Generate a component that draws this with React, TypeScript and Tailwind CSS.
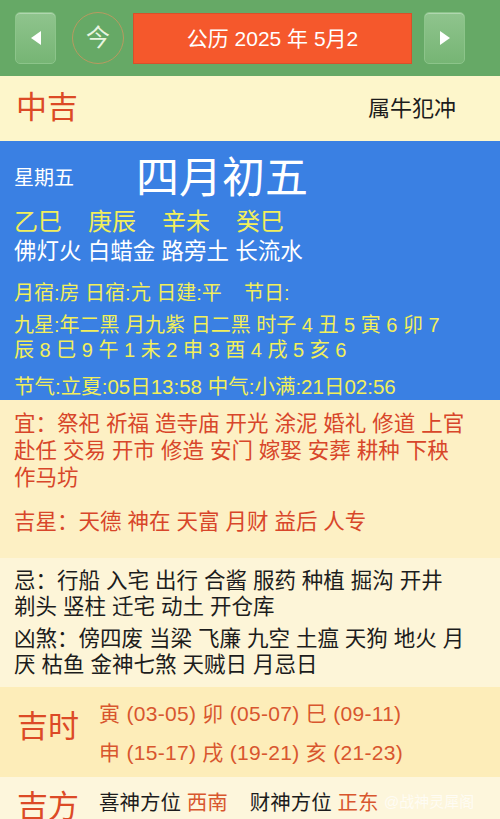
const cjk = { fontFamily: '"Liberation Sans", "Noto Sans CJK SC", sans-serif' }

function NavButton({ dir }: { dir: 'left' | 'right' }) {
  return (
    <div className="w-[41px] h-[52px] rounded-[5px] border border-[#8cc48a] bg-gradient-to-b from-[#8fc48d] to-[#76b574] flex items-center justify-center shadow-[inset_0_1px_0_rgba(255,255,255,0.3)]">
      <svg width="12" height="14" viewBox="0 0 12 14">
        {dir === 'left' ? (
          <polygon points="11,0 11,14 1,7" fill="#ffffff" />
        ) : (
          <polygon points="1,0 1,14 11,7" fill="#ffffff" />
        )}
      </svg>
    </div>
  )
}

export default function App() {
  return (
    <div className="w-[500px] h-[819px] overflow-hidden relative" style={cjk}>
      {/* Header */}
      <div className="h-[76px] bg-[#66a966] flex items-center pl-[15px] pr-[35px]">
        <NavButton dir="left" />
        <div className="ml-[16px] w-[52px] h-[52px] rounded-full border-[1.5px] border-[#b89a60] flex items-center justify-center text-[24px] text-[#e8f5e0] leading-none">
          今
        </div>
        <div className="ml-[9px] w-[279px] h-[51px] bg-[#f5582c] border border-[#d8502a] flex items-center justify-center text-white text-[21px] leading-none">
          公历 2025 年 5月2
        </div>
        <div className="ml-[12px]">
          <NavButton dir="right" />
        </div>
      </div>

      {/* 中吉 */}
      <div className="h-[65px] bg-[#fdf6cb] flex items-center justify-between pl-[16px] pr-[44px]">
        <span className="text-[31px] text-[#dc4a26] leading-none -mt-[3px]">中吉</span>
        <span className="text-[22px] text-[#1c1c1c] leading-none">属牛犯冲</span>
      </div>

      {/* Blue panel */}
      <div className="h-[259px] bg-[#3a80e3] pl-[14px] pt-[14px]">
        <div className="flex items-center h-[46px]">
          <span className="text-[20px] text-white leading-[46px]">星期五</span>
          <span className="ml-[62px] text-[43px] text-white leading-[46px]">四月初五</span>
        </div>
        <div className="flex gap-x-[26px] text-[24px] text-[#f2ef5a] leading-[30px] mt-[6px]">
          <span>乙巳</span>
          <span>庚辰</span>
          <span>辛未</span>
          <span>癸巳</span>
        </div>
        <div className="text-[22.5px] text-white leading-[30px]">佛灯火 白蜡金 路旁土 长流水</div>
        <div className="text-[20px] text-[#f2ef5a] leading-[28px] mt-[12px]">
          月宿:房 日宿:亢 日建:平&nbsp;&nbsp;&nbsp; 节日:
        </div>
        <div className="text-[20px] text-[#f2ef5a] leading-[25px] mt-[6px]">
          <div>九星:年二黑 月九紫 日二黑 时子 4 丑 5 寅 6 卯 7</div>
          <div>辰 8 巳 9 午 1 未 2 申 3 酉 4 戌 5 亥 6</div>
        </div>
        <div className="text-[20.5px] text-[#f2ef5a] leading-[28px] mt-[10px]">
          节气:立夏:05日13:58 中气:小满:21日02:56
        </div>
      </div>

      {/* 宜 */}
      <div className="h-[158px] bg-[#fdf0c4] pl-[14px] pt-[11px] text-[21.5px] text-[#d8462a] leading-[27px]">
        <div>宜：祭祀 祈福 造寺庙 开光 涂泥 婚礼 修道 上官</div>
        <div>赴任 交易 开市 修造 安门 嫁娶 安葬 耕种 下秧</div>
        <div>作马坊</div>
        <div className="mt-[17px]">吉星：天德 神在 天富 月财 益后 人专</div>
      </div>

      {/* 忌 */}
      <div className="h-[129px] bg-[#fdf5d8] pl-[14px] pt-[10px] text-[21.5px] text-[#1c1c1c] leading-[26px]">
        <div>忌：行船 入宅 出行 合酱 服药 种植 掘沟 开井</div>
        <div>剃头 竖柱 迁宅 动土 开仓库</div>
        <div className="mt-[6px]">凶煞：傍四废 当梁 飞廉 九空 土瘟 天狗 地火 月</div>
        <div>厌 枯鱼 金神七煞 天贼日 月忌日</div>
      </div>

      {/* 吉时 */}
      <div className="h-[90px] bg-[#fdedb9] flex items-start pl-[17px] pt-[7px]">
        <span className="text-[31px] text-[#dc4a26] leading-none mt-[17px]">吉时</span>
        <div className="ml-[20px] text-[21px] tracking-[0.3px] text-[#d8562e] leading-[39px]">
          <div>寅 (03-05) 卯 (05-07) 巳 (09-11)</div>
          <div>申 (15-17) 戌 (19-21) 亥 (21-23)</div>
        </div>
      </div>

      {/* 吉方 */}
      <div className="h-[60px] bg-[#fdf6dc] flex items-start pl-[17px] pt-[12px]">
        <span className="text-[31px] text-[#dc4a26] leading-[36px]">吉方</span>
        <div className="ml-[20px] mt-[1px] text-[20.5px] leading-[26px] text-[#1c1c1c]">
          喜神方位 <span className="text-[#d8562e]">西南</span>
          <span className="ml-[22px]">财神方位</span> <span className="text-[#d8562e]">正东</span>
        </div>
      </div>

      {/* watermark */}
      <div className="absolute left-[384px] top-[794px] text-[15px] text-white/70 leading-none">
        @战神灵犀阁
      </div>
    </div>
  )
}
